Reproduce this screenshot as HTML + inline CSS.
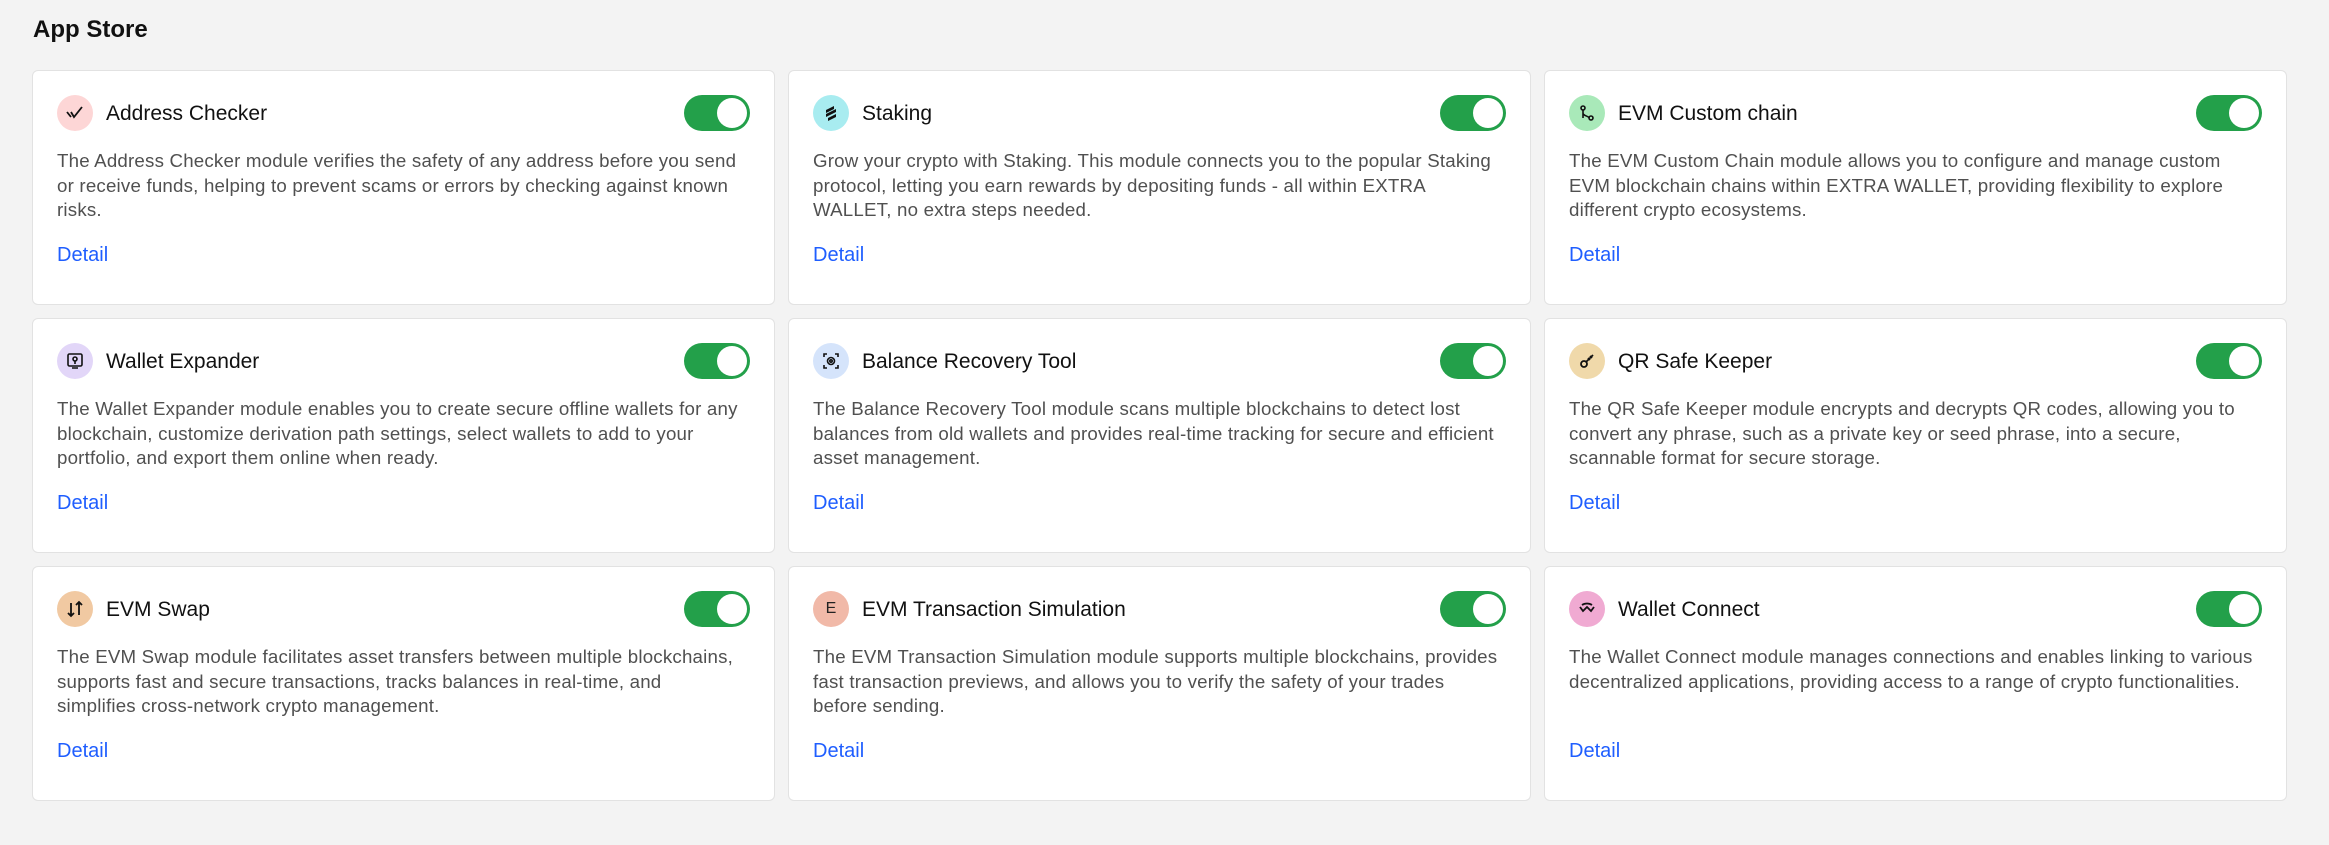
<!DOCTYPE html>
<html><head><meta charset="utf-8"><style>
*{box-sizing:border-box;margin:0;padding:0}
body{width:2329px;height:845px;background:#f3f3f3;font-family:"Liberation Sans",sans-serif;position:relative;overflow:hidden}
h1{position:absolute;left:33px;top:16px;font-size:24px;font-weight:bold;color:#111}
.card{position:absolute;width:743px;height:235px;background:#fff;border:1px solid #e2e2e2;border-radius:6px}
.ic{position:absolute;left:24px;top:24px;width:36px;height:36px;border-radius:50%;display:flex;align-items:center;justify-content:center;font-size:16px;color:#222}
.t{position:absolute;left:73px;top:31px;font-size:21px;color:#111}
.tg{position:absolute;right:24px;top:24px;width:66px;height:36px;border-radius:18px;background:#23a04a}
.tg:after{content:"";position:absolute;right:3px;top:3px;width:30px;height:30px;border-radius:50%;background:#fff}
.d{position:absolute;left:24px;top:78px;white-space:nowrap;font-size:18.7px;letter-spacing:0.2px;line-height:24.5px;color:#505050}
.l{position:absolute;left:24px;top:173px;font-size:20px;color:#1f5eff}
</style></head><body>
<h1>App Store</h1>

<div class="card" style="left:32px;top:70px"><div class="ic" style="background:#fdd6d6"><svg width="18" height="14" viewBox="0 0 18 14" fill="none" stroke="#111" stroke-width="1.8"><path d="M1 6l4 5M5 6l3 5 8-10M9 6"/></svg></div><div class="t">Address Checker</div><div class="tg"></div><div class="d">The Address Checker module verifies the safety of any address before you send<br>or receive funds, helping to prevent scams or errors by checking against known<br>risks.</div><div class="l">Detail</div></div>

<div class="card" style="left:788px;top:70px"><div class="ic" style="background:#a8ecf0"><svg width="16" height="18" viewBox="0 0 16 18" fill="#111"><path d="M3 6l8-4v3L3 9zM3 10l10-5v3L3 13zM5 14l8-4v3l-8 4z"/></svg></div><div class="t">Staking</div><div class="tg"></div><div class="d">Grow your crypto with Staking. This module connects you to the popular Staking<br>protocol, letting you earn rewards by depositing funds - all within EXTRA<br>WALLET, no extra steps needed.</div><div class="l">Detail</div></div>

<div class="card" style="left:1544px;top:70px"><div class="ic" style="background:#a9e9b9"><svg width="18" height="18" viewBox="0 0 18 18" fill="none" stroke="#111" stroke-width="1.6"><circle cx="5" cy="4" r="2"/><circle cx="13" cy="14" r="2"/><path d="M5 6v8M5 9c0 3 6 3 6 5"/></svg></div><div class="t">EVM Custom chain</div><div class="tg"></div><div class="d">The EVM Custom Chain module allows you to configure and manage custom<br>EVM blockchain chains within EXTRA WALLET, providing flexibility to explore<br>different crypto ecosystems.</div><div class="l">Detail</div></div>

<div class="card" style="left:32px;top:318px"><div class="ic" style="background:#e2d6f8"><svg width="18" height="18" viewBox="0 0 18 18" fill="none" stroke="#111" stroke-width="1.6"><rect x="2" y="2" width="14" height="12" rx="1.5"/><circle cx="9" cy="7" r="2"/><path d="M9 9v3M6 16h6"/></svg></div><div class="t">Wallet Expander</div><div class="tg"></div><div class="d">The Wallet Expander module enables you to create secure offline wallets for any<br>blockchain, customize derivation path settings, select wallets to add to your<br>portfolio, and export them online when ready.</div><div class="l">Detail</div></div>

<div class="card" style="left:788px;top:318px"><div class="ic" style="background:#d5e4fb"><svg width="18" height="18" viewBox="0 0 18 18" fill="none" stroke="#111" stroke-width="1.6"><path d="M2 5V2h3M13 2h3v3M16 13v3h-3M5 16H2v-3"/><circle cx="9" cy="9" r="3.5"/><circle cx="9" cy="9" r="1.2"/></svg></div><div class="t">Balance Recovery Tool</div><div class="tg"></div><div class="d">The Balance Recovery Tool module scans multiple blockchains to detect lost<br>balances from old wallets and provides real-time tracking for secure and efficient<br>asset management.</div><div class="l">Detail</div></div>

<div class="card" style="left:1544px;top:318px"><div class="ic" style="background:#f0d9aa"><svg width="18" height="18" viewBox="0 0 18 18" fill="none" stroke="#111" stroke-width="1.8"><circle cx="6" cy="12" r="3"/><path d="M8 10l7-7M12 4l2 2M10 6l2 2"/></svg></div><div class="t">QR Safe Keeper</div><div class="tg"></div><div class="d">The QR Safe Keeper module encrypts and decrypts QR codes, allowing you to<br>convert any phrase, such as a private key or seed phrase, into a secure,<br>scannable format for secure storage.</div><div class="l">Detail</div></div>

<div class="card" style="left:32px;top:566px"><div class="ic" style="background:#f1c9a2"><svg width="18" height="18" viewBox="0 0 18 18" fill="none" stroke="#111" stroke-width="1.8"><path d="M5 16V3M2 13l3 3 3-3M13 2v13M10 5l3-3 3 3"/></svg></div><div class="t">EVM Swap</div><div class="tg"></div><div class="d">The EVM Swap module facilitates asset transfers between multiple blockchains,<br>supports fast and secure transactions, tracks balances in real-time, and<br>simplifies cross-network crypto management.</div><div class="l">Detail</div></div>

<div class="card" style="left:788px;top:566px"><div class="ic" style="background:#f1b9a8">E</div><div class="t">EVM Transaction Simulation</div><div class="tg"></div><div class="d">The EVM Transaction Simulation module supports multiple blockchains, provides<br>fast transaction previews, and allows you to verify the safety of your trades<br>before sending.</div><div class="l">Detail</div></div>

<div class="card" style="left:1544px;top:566px"><div class="ic" style="background:#f0aad2"><svg width="18" height="14" viewBox="0 0 18 14" fill="none" stroke="#111" stroke-width="1.8"><path d="M2 5l3 4 4-4 4 4 3-4M4 3c3-2 7-2 10 0"/></svg></div><div class="t">Wallet Connect</div><div class="tg"></div><div class="d">The Wallet Connect module manages connections and enables linking to various<br>decentralized applications, providing access to a range of crypto functionalities.</div><div class="l">Detail</div></div>
</body></html>
